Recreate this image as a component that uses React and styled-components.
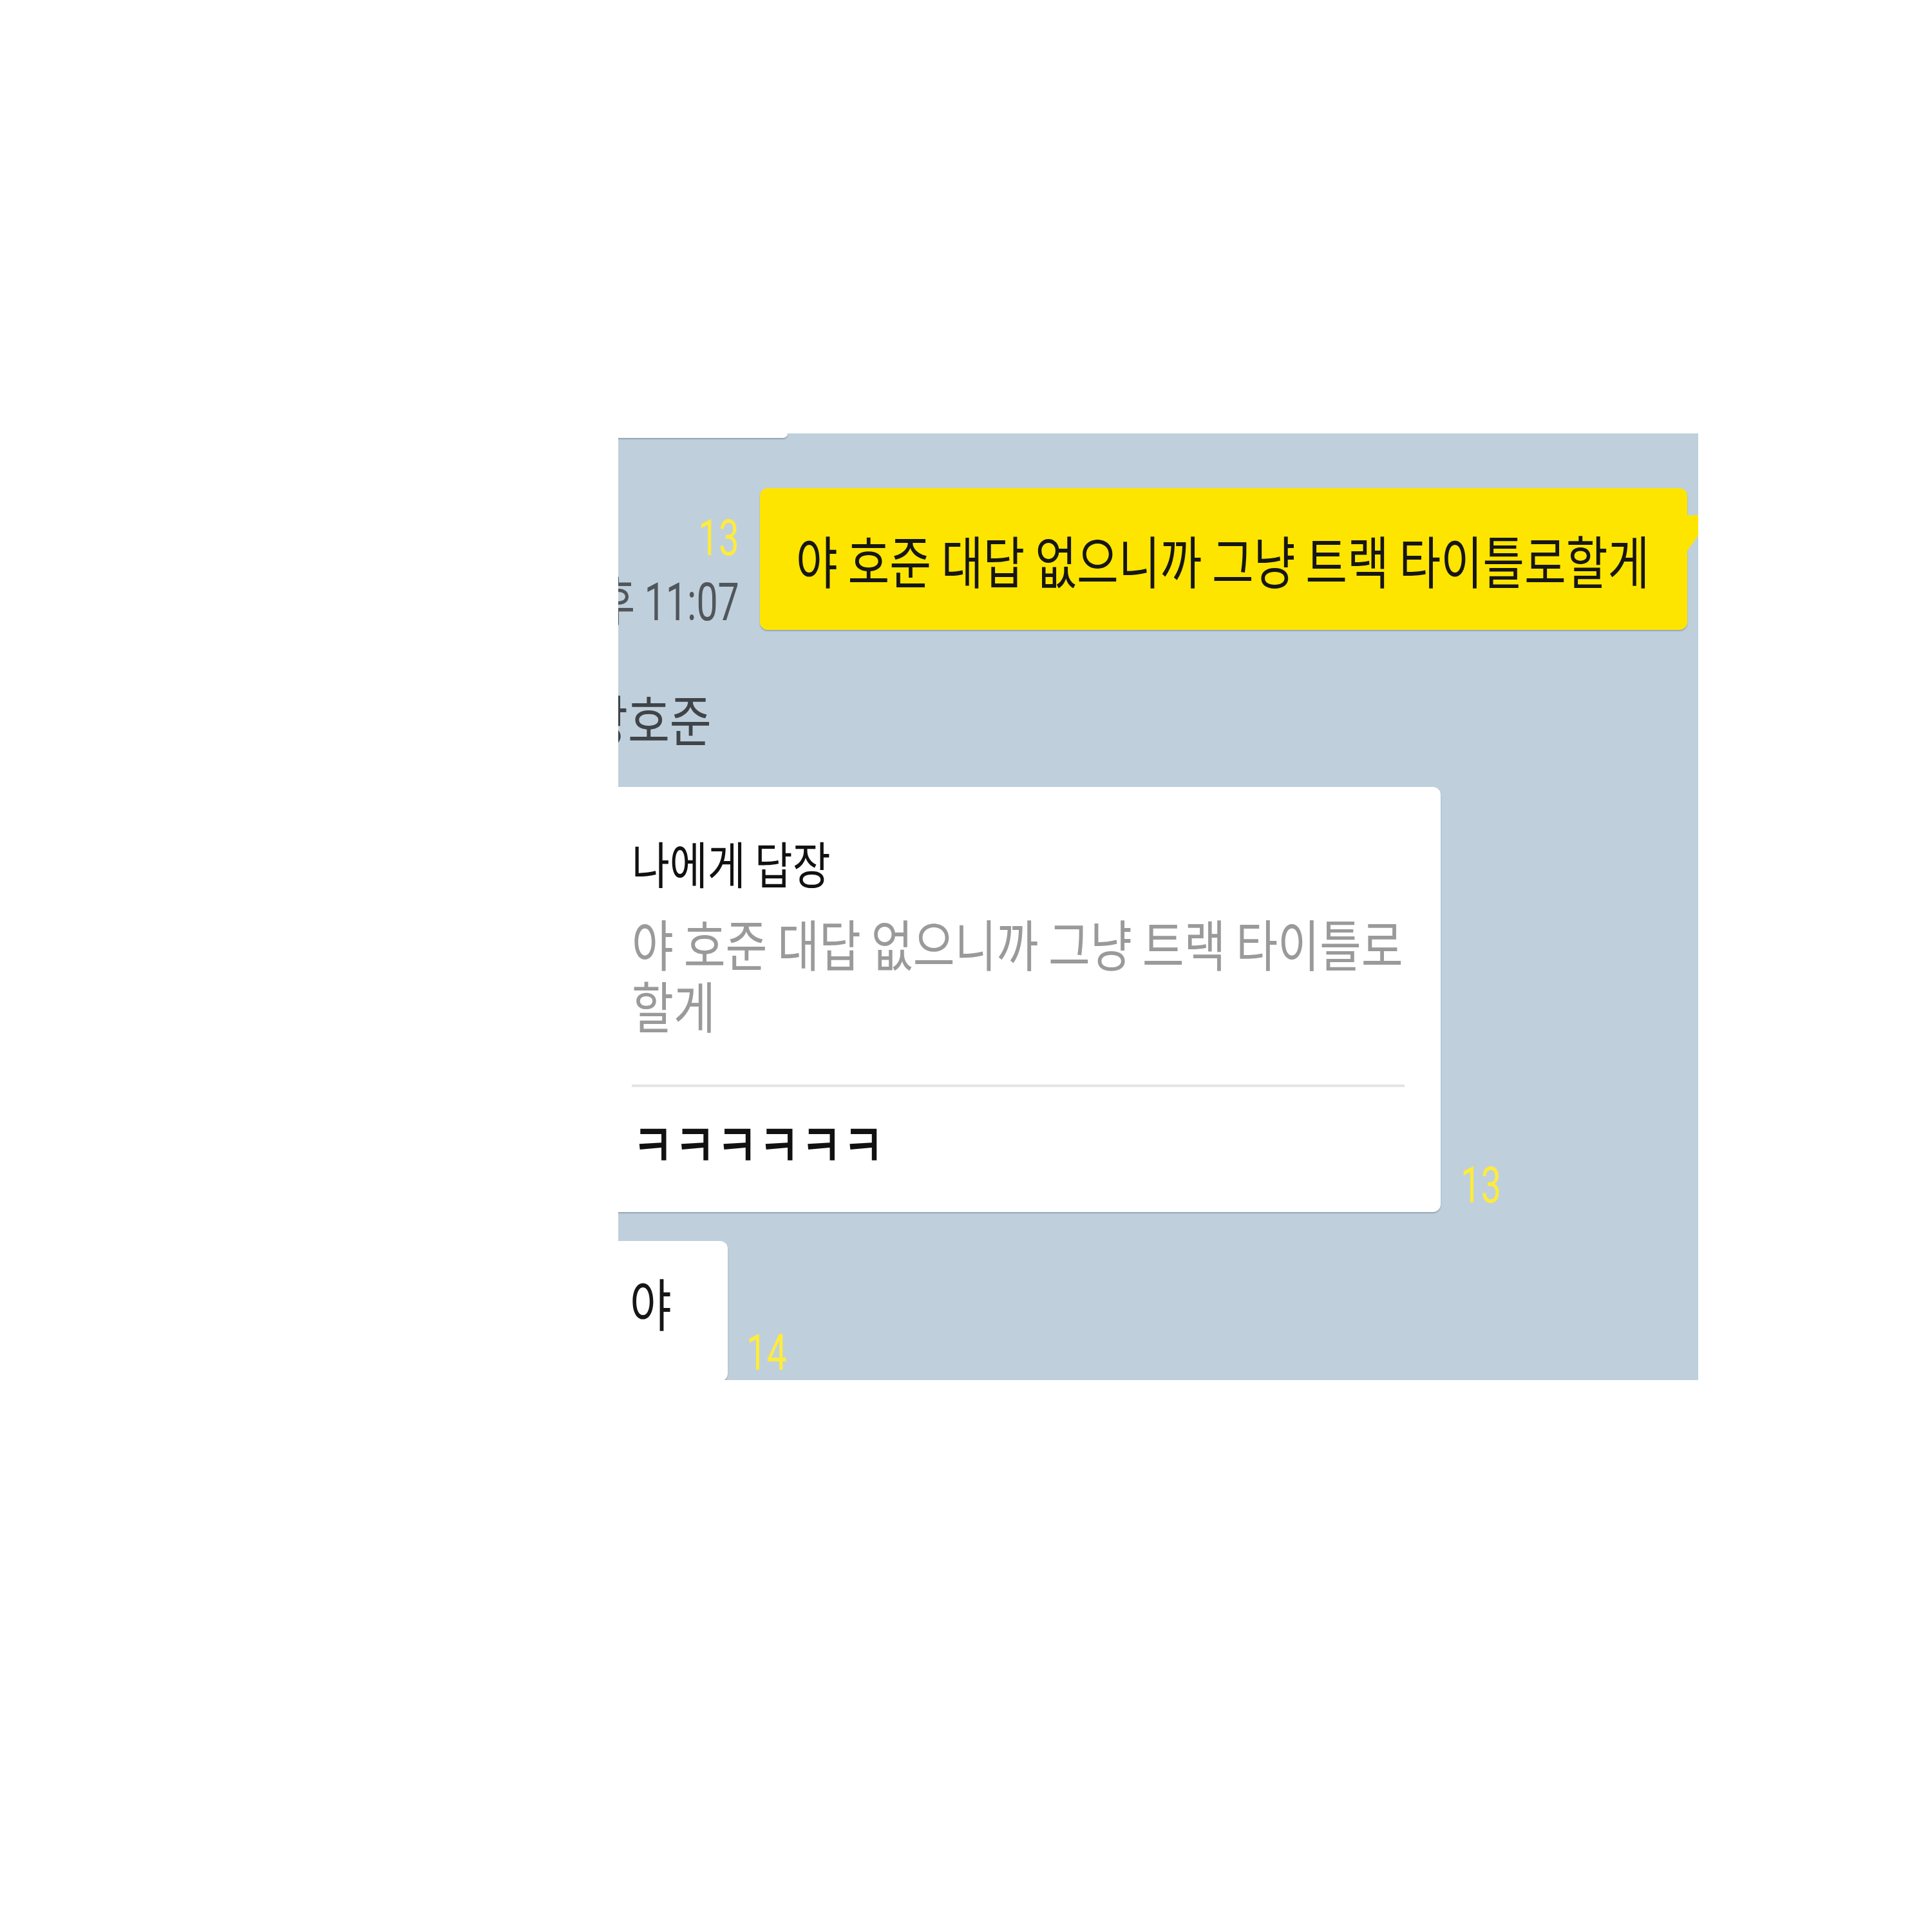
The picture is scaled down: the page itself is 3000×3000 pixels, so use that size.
import styled, { createGlobalStyle, css } from "styled-components";

const GlobalStyle = createGlobalStyle`
  body {
    margin: 0;
    background: #ffffff;
  }
`;

// the capture is horizontally squeezed, so text is narrowed the same way
const squeeze = (amount) => css`
  transform: scaleX(${amount});
  transform-origin: ${(p) => (p.$right ? "right" : "left")} center;
  white-space: nowrap;
`;

const Page = styled.div`
  padding: 673px 0 0 960px;
`;

const Panel = styled.div`
  width: 1677px;
  height: 1470px;
  overflow: hidden;
  background: #bfd0dc;
  font-family: "Noto Sans CJK KR", sans-serif;
`;

const Feed = styled.div`
  display: flex;
  flex-direction: column;
  margin-left: -40px;
  padding-right: 17px;
`;

const PrevBubble = styled.div`
  width: 303px;
  height: 7px;
  background: #ffffff;
  border-bottom-right-radius: 10px;
  box-shadow: 0 2px 2px rgba(40, 60, 80, 0.3);
`;

const Row = styled.div`
  display: flex;
  align-items: flex-end;
  justify-content: ${(p) => (p.$mine ? "flex-end" : "flex-start")};
  gap: ${(p) => p.$gap || 29}px;
  margin-top: ${(p) => p.$top || 0}px;
`;

const Meta = styled.div`
  display: flex;
  flex-direction: column;
  align-items: flex-end;
  gap: 20px;
  margin-bottom: 2px;
`;

const Count = styled.div`
  ${squeeze(0.73)};
  font-family: Roboto, "Liberation Sans", sans-serif;
  font-weight: 400;
  font-size: 77px;
  line-height: 1;
  color: #ffeb3b;
  margin-bottom: ${(p) => p.$bottom || 0}px;
`;

const Time = styled.div`
  ${squeeze(0.73)};
  font-family: Roboto, "Noto Sans CJK KR", sans-serif;
  font-size: 81px;
  line-height: 1;
  color: #50565b;
`;

const Bubble = styled.div`
  position: relative;
  box-sizing: border-box;
  width: ${(p) => p.$w}px;
  height: ${(p) => p.$h}px;
  flex-shrink: 0;
  background: ${(p) => (p.$mine ? "#fee500" : "#ffffff")};
  border-radius: 12px;
  box-shadow: 0 2px 2px rgba(40, 60, 80, 0.28);

  ${(p) =>
    p.$mine &&
    css`
      &::after {
        content: "";
        position: absolute;
        top: 42px;
        right: -40px;
        width: 40px;
        height: 55px;
        background: #fee500;
        clip-path: polygon(0 0, 100% 0, 0 100%);
      }
    `}
`;

const MineBubble = styled(Bubble)`
  display: flex;
  align-items: center;
  padding-left: 56px;
`;

const ReplyBubble = styled(Bubble)`
  display: flex;
  flex-direction: column;
  padding: 71px 56px 0 61px;
`;

const ShortBubble = styled(Bubble)`
  padding: 41px 0 0 58px;
`;

const MessageText = styled.div`
  ${squeeze(0.8)};
  font-size: 88px;
  line-height: 1.2;
  color: #161616;
`;

const Name = styled.div`
  ${squeeze(0.82)};
  margin: 85px 0 0 -10px;
  font-size: 86px;
  line-height: 1.2;
  color: #3f4448;
`;

const ReplyTitle = styled.div`
  ${squeeze(0.82)};
  font-size: 78px;
  line-height: 1.2;
  color: #111111;
`;

const ReplyPreview = styled.div`
  ${squeeze(0.82)};
  margin-top: 29px;
  font-size: 86px;
  line-height: 96px;
  color: #9a9a9a;
`;

const Divider = styled.div`
  height: 4px;
  margin-top: 76px;
  background: #e4e4e4;
`;

const ReplyText = styled.div`
  ${squeeze(0.74)};
  margin-top: 26px;
  font-size: 96px;
  font-weight: 500;
  line-height: 1.2;
  color: #111111;
`;

const message = "야 호준 대답 없으니까 그냥 트랙 타이틀로할게";

export default function App() {
  return (
    <>
      <GlobalStyle />
      <Page>
        <Panel>
          <Feed>
            <PrevBubble />

            <Row $mine $top={78} $gap={32}>
              <Meta>
                <Count $right>13</Count>
                <Time $right>오후 11:07</Time>
              </Meta>
              <MineBubble $mine $w={1440} $h={220}>
                <MessageText>{message}</MessageText>
              </MineBubble>
            </Row>

            <Name>강호준</Name>

            <Row $top={56} $gap={31}>
              <ReplyBubble $w={1317} $h={660}>
                <ReplyTitle>나에게 답장</ReplyTitle>
                <ReplyPreview>
                  야 호준 대답 없으니까 그냥 트랙 타이틀로
                  <br />
                  할게
                </ReplyPreview>
                <Divider />
                <ReplyText>ㅋㅋㅋㅋㅋㅋ</ReplyText>
              </ReplyBubble>
              <Count $bottom={2}>13</Count>
            </Row>

            <Row $top={45} $gap={29}>
              <ShortBubble $w={210} $h={218}>
                <MessageText>야</MessageText>
              </ShortBubble>
              <Count $bottom={5}>14</Count>
            </Row>
          </Feed>
        </Panel>
      </Page>
    </>
  );
}
